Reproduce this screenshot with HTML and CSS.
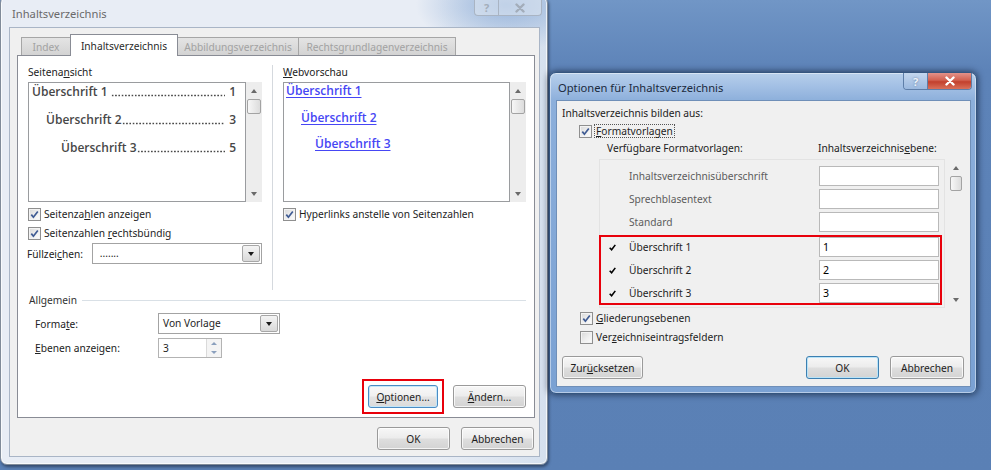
FILE: index.html
```html
<!DOCTYPE html>
<html lang="de">
<head>
<meta charset="utf-8">
<title>Inhaltsverzeichnis</title>
<link rel="stylesheet" href="styles.css">
</head>
<body>
<main class="desktop">

  <section class="win win-main">
    <header class="titlebar">
      <span class="title">Inhaltsverzeichnis</span>
      <div class="capbtns">
        <span class="capbtn cap-help">?</span>
        <span class="capbtn cap-close"><svg class="xicon" viewBox="0 0 12 10"><path d="M2.5 1.5 L9.5 8.5 M9.5 1.5 L2.5 8.5"/></svg></span>
      </div>
    </header>
    <div class="client main-client">
      <div class="tabs">
        <span class="tab tab-index">Index</span>
        <span class="tab tab-active">Inhaltsverzeichnis</span>
        <span class="tab tab-abb">Abbildungsverzeichnis</span>
        <span class="tab tab-rg">Rechtsgrundlagenverzeichnis</span>
      </div>
      <div class="panel">
        <div class="upper">
          <div class="col">
            <div class="cap-label">Seitena<u>n</u>sicht</div>
            <div class="listwrap">
              <div class="listbox preview">
                <div class="toc lvl1"><span>Überschrift 1&nbsp;</span><span class="dots"></span><span class="pg">1</span></div>
                <div class="toc lvl2"><span>Überschrift 2</span><span class="dots"></span><span class="pg">3</span></div>
                <div class="toc lvl3"><span>Überschrift 3</span><span class="dots"></span><span class="pg">5</span></div>
              </div>
              <div class="vscroll">
                <span class="sarrow up"></span>
                <span class="thumb"></span>
                <span class="strack"></span>
                <span class="sarrow down"></span>
              </div>
            </div>
            <div class="check first"><span class="cb"><svg viewBox="0 0 11 11"><path d="M2.3 5.6 L4.4 8.2 L8.8 2.4"/></svg></span><span>Seitenza<u>h</u>len anzeigen</span></div>
            <div class="check"><span class="cb"><svg viewBox="0 0 11 11"><path d="M2.3 5.6 L4.4 8.2 L8.8 2.4"/></svg></span><span>Seitenzahlen <u>r</u>echtsbündig</span></div>
            <div class="field">
              <span class="flabel">Füllzei<u>c</u>hen:</span>
              <div class="combo combo-fz"><span class="ctext">.......</span><span class="cdrop"></span></div>
            </div>
          </div>
          <div class="vsep"></div>
          <div class="col">
            <div class="cap-label"><u>W</u>ebvorschau</div>
            <div class="listwrap">
              <div class="listbox web">
                <div class="wlink lvl1">Überschrift 1</div>
                <div class="wlink lvl2">Überschrift 2</div>
                <div class="wlink lvl3">Überschrift 3</div>
              </div>
              <div class="vscroll">
                <span class="sarrow up"></span>
                <span class="thumb"></span>
                <span class="strack"></span>
                <span class="sarrow down"></span>
              </div>
            </div>
            <div class="check first"><span class="cb"><svg viewBox="0 0 11 11"><path d="M2.3 5.6 L4.4 8.2 L8.8 2.4"/></svg></span><span>Hyperlinks anstelle von Seitenzahlen</span></div>
          </div>
        </div>
        <div class="group"><span>Allgemein</span><span class="gline"></span></div>
        <div class="form">
          <span class="flabel">Forma<u>t</u>e:</span>
          <div class="combo combo-fmt"><span class="ctext">Von Vorlage</span><span class="cdrop"></span></div>
          <span class="flabel"><u>E</u>benen anzeigen:</span>
          <div class="spin"><span class="stext">3</span><span class="sbtns"><span class="sup"></span><span class="sdown"></span></span></div>
        </div>
        <div class="panel-buttons">
          <div class="redframe"><span class="btn btn-focus"><span><u>O</u>ptionen...</span></span></div>
          <span class="btn"><span><u>Ä</u>ndern...</span></span>
        </div>
      </div>
      <div class="dlg-buttons">
        <span class="btn">OK</span>
        <span class="btn">Abbrechen</span>
      </div>
    </div>
  </section>

  <section class="win win-opts">
    <header class="titlebar">
      <span class="title">Optionen für Inhaltsverzeichnis</span>
      <div class="capbtns">
        <span class="capbtn cap-help">?</span>
        <span class="capbtn cap-close"><svg class="xicon" viewBox="0 0 12 10"><path d="M2.5 1.5 L9.5 8.5 M9.5 1.5 L2.5 8.5"/></svg></span>
      </div>
    </header>
    <div class="client opts-client">
      <div class="opts-intro">Inhaltsverzeichnis bilden aus:</div>
      <div class="check opts-fv"><span class="cb"><svg viewBox="0 0 11 11"><path d="M2.3 5.6 L4.4 8.2 L8.8 2.4"/></svg></span><span class="focusrect"><u>F</u>ormatvorlagen</span></div>
      <div class="opts-head"><span>Verfügbare Formatvorlagen:</span><span>Inhaltsverzeichnis<u>e</u>bene:</span></div>
      <div class="optlist">
        <div class="rows">
          <div class="srow muted"><span class="mark"></span><span class="sname">Inhaltsverzeichnisüberschrift</span><span class="lvl"></span></div>
          <div class="srow muted"><span class="mark"></span><span class="sname">Sprechblasentext</span><span class="lvl"></span></div>
          <div class="srow muted"><span class="mark"></span><span class="sname">Standard</span><span class="lvl"></span></div>
          <div class="redbox">
            <div class="srow"><span class="mark"><svg viewBox="0 0 8 8"><path d="M0.8 4.2 L3 6.6 L7.2 1"/></svg></span><span class="sname">Überschrift 1</span><span class="lvl">1</span></div>
            <div class="srow"><span class="mark"><svg viewBox="0 0 8 8"><path d="M0.8 4.2 L3 6.6 L7.2 1"/></svg></span><span class="sname">Überschrift 2</span><span class="lvl">2</span></div>
            <div class="srow"><span class="mark"><svg viewBox="0 0 8 8"><path d="M0.8 4.2 L3 6.6 L7.2 1"/></svg></span><span class="sname">Überschrift 3</span><span class="lvl">3</span></div>
          </div>
        </div>
        <div class="vscroll opts-scroll">
          <span class="sarrow up"></span>
          <span class="thumb"></span>
          <span class="strack"></span>
          <span class="sarrow down"></span>
        </div>
      </div>
      <div class="check opts-gl"><span class="cb"><svg viewBox="0 0 11 11"><path d="M2.3 5.6 L4.4 8.2 L8.8 2.4"/></svg></span><span><u>G</u>liederungsebenen</span></div>
      <div class="check opts-vz"><span class="cb"></span><span>Ver<u>z</u>eichniseintragsfeldern</span></div>
      <div class="opts-buttons">
        <span class="btn btn-reset">Zur<u>ü</u>cksetzen</span>
        <span class="spacer"></span>
        <span class="btn btn-default">OK</span>
        <span class="btn btn-cancel">Abbrechen</span>
      </div>
    </div>
  </section>

</main>
</body>
</html>
```

FILE: styles.css
```css
* { box-sizing: border-box; }
html, body { margin: 0; padding: 0; }
body {
  width: 991px;
  height: 470px;
  overflow: hidden;
  background: #5a80b5;
  font-family: "Noto Sans", "Open Sans", sans-serif;
  font-size: 10.2px;
  color: #1e1e1e;
}
u { text-decoration: underline; text-underline-offset: 1px; }

.desktop {
  position: relative;
  width: 991px;
  height: 470px;
  background: linear-gradient(180deg, #7196c6 0, #5d83b8 70px, #5a80b5 100%);
}

/* ---------- windows ---------- */
.win {
  position: absolute;
  display: flex;
  flex-direction: column;
}
.titlebar {
  display: flex;
  justify-content: space-between;
  align-items: flex-start;
  flex: none;
}
.title { font-size: 11.2px; line-height: 14px; white-space: nowrap; }
.capbtns { display: flex; }
.capbtn {
  display: flex;
  align-items: center;
  justify-content: center;
  font-weight: 700;
  font-size: 11px;
}
.xicon { width: 12px; height: 10px; }
.xicon path { fill: none; stroke-width: 2.4; stroke-linecap: round; }

.client {
  flex: 1;
  display: flex;
  flex-direction: column;
  background: #f0f0f0;
}

/* main (inactive) window */
.win-main {
  left: 0;
  top: -4px;
  width: 548px;
  height: 469px;
  border: 1px solid #808b99;
  border-radius: 7px;
  background:
    radial-gradient(ellipse 90px 46px at 505px 8px, rgba(140, 172, 215, 0.85), rgba(140, 172, 215, 0) 100%),
    linear-gradient(90deg, #e8edf5 0%, #e8edf5 80%, #d5e0ee 100%);
  box-shadow: 1px 2px 3px rgba(20, 30, 50, 0.55), inset 0 0 0 1px rgba(255, 255, 255, 0.7);
}
.win-main .titlebar { height: 30px; padding: 0 5px 0 11px; }
.win-main .title { padding-top: 10px; color: #6a6a6a; }
.win-main .capbtns {
  margin-top: 3px;
  height: 16px;
  border: 1px solid #a9b4c3;
  border-top: none;
  border-radius: 0 0 4px 4px;
  background: rgba(225, 233, 243, 0.55);
}
.win-main .capbtn { color: #a3adba; }
.win-main .cap-help { width: 24px; border-right: 1px solid #a9b4c3; }
.win-main .cap-close { width: 42px; }
.win-main .xicon path { stroke: #a3adba; }
.main-client {
  margin: 0 7px 7px 8px;
  border: 1px solid #a9b5c6;
  padding: 6px 4px 6px 7px;
}

/* tabs */
.tabs {
  height: 21px;
  display: flex;
  align-items: flex-end;
  padding-left: 4px;
  flex: none;
}
.tab {
  height: 18px;
  display: flex;
  align-items: center;
  justify-content: center;
  border: 1px solid #a6a6a6;
  border-bottom: none;
  background: linear-gradient(#e4e4e4, #d3d3d3);
  color: #a2a2a2;
  margin-left: -1px;
  white-space: nowrap;
}
.tab-index { width: 50px; margin-left: 0; }
.tab-active {
  width: 108px;
  height: 22px;
  background: #fff;
  border-color: #898c95;
  color: #2a2a2a;
  margin-bottom: -1px;
  position: relative;
  z-index: 1;
}
.tab-abb { width: 122px; }
.tab-rg { width: 158px; }

.panel {
  flex: 1;
  display: flex;
  flex-direction: column;
  background: #fff;
  border: 1px solid #898c95;
  padding: 9px 8px 0 10px;
}
.upper {
  display: grid;
  grid-template-columns: 234px 21px 243px;
  height: 225px;
}
.col { display: flex; flex-direction: column; }
.vsep { width: 1px; justify-self: center; background: #d5d9de; }
.cap-label { line-height: 14px; margin-bottom: 3px; color: #222; }

.listwrap { display: flex; height: 120px; }
.listbox {
  flex: 1;
  border: 1px solid #9a9c9f;
  background: #fff;
  overflow: hidden;
}
.preview {
  padding: 0 9px 0 3px;
  font-family: "Open Sans", "Noto Sans", sans-serif;
  font-weight: 600;
  font-size: 12px;
  color: #474747;
}
.toc { display: flex; line-height: 18px; margin-bottom: 10px; white-space: nowrap; }
.toc .dots {
  flex: 1;
  height: 18px;
  background-image: radial-gradient(circle, #4a4a4a 0.85px, rgba(74, 74, 74, 0) 1.15px);
  background-size: 3.3px 3px;
  background-repeat: repeat-x;
  background-position: left 0 bottom 4px;
}
.toc .pg { padding-left: 4px; }
.preview .lvl2 { padding-left: 14px; }
.preview .lvl3 { padding-left: 29px; }

.web {
  padding-left: 2px;
  font-family: "Open Sans", "Noto Sans", sans-serif;
  font-weight: 600;
  font-size: 12px;
}
.wlink {
  line-height: 16px;
  margin-bottom: 10.5px;
  color: #4646f4;
  text-decoration: underline;
  text-underline-offset: 2px;
}
.web .lvl2 { padding-left: 15px; }
.web .lvl3 { padding-left: 29px; }

.vscroll {
  width: 16px;
  display: flex;
  flex-direction: column;
  background: #ededed;
}
.sarrow { height: 17px; display: flex; align-items: center; justify-content: center; flex: none; }
.sarrow::before {
  content: "";
  border-left: 3.5px solid transparent;
  border-right: 3.5px solid transparent;
}
.sarrow.up::before { border-bottom: 4px solid #6a6a6a; }
.sarrow.down::before { border-top: 4px solid #6a6a6a; }
.thumb {
  height: 15px;
  margin: 0 1px;
  border: 1px solid #a3a3a3;
  border-radius: 2px;
  background: linear-gradient(90deg, #f7f7f7, #dcdcdc);
  flex: none;
}
.strack { flex: 1; }

.check { display: flex; align-items: center; height: 18px; gap: 3px; white-space: nowrap; }
.check.first { margin-top: 3px; }
.check + .check { margin-top: 1px; }
.cb {
  width: 13px;
  height: 13px;
  flex: none;
  border: 1px solid #8f8f8f;
  background: linear-gradient(135deg, #d8d8d8 0%, #efefef 55%, #fdfdfd 100%);
  box-shadow: inset 0 0 0 1px #f3f3f3;
  display: flex;
  align-items: center;
  justify-content: center;
}
.cb svg { width: 11px; height: 11px; }
.cb path { fill: none; stroke: #3f5b93; stroke-width: 1.7; }

.field { display: flex; align-items: center; margin-top: 1px; margin-left: -1px; }
.flabel { white-space: nowrap; color: #222; }
.field .flabel { width: 65px; }
.combo {
  height: 21px;
  display: flex;
  border: 1px solid #a3a3a3;
  background: #fff;
}
.combo-fz { width: 171px; }
.combo-fmt { width: 122px; }
.ctext { flex: 1; padding-left: 7px; line-height: 19px; white-space: nowrap; }
.combo-fmt .ctext { padding-left: 4px; }
.cdrop {
  width: 18px;
  margin: 1px;
  border: 1px solid #a7a7a7;
  border-radius: 2px;
  background: linear-gradient(#f4f4f4, #d9d9d9);
  display: flex;
  align-items: center;
  justify-content: center;
}
.cdrop::before {
  content: "";
  border-left: 3.5px solid transparent;
  border-right: 3.5px solid transparent;
  border-top: 4px solid #1a1a1a;
}

.group { display: flex; align-items: center; height: 14px; margin-top: 3px; padding-left: 1px; color: #333; }
.gline { flex: 1; height: 1px; margin-left: 5px; background: #d9e0e6; }

.form {
  display: grid;
  grid-template-columns: 123px auto;
  align-items: center;
  row-gap: 4px;
  margin-top: 6px;
  padding-left: 7px;
}
.form .combo, .form .spin { justify-self: start; }
.spin {
  width: 64px;
  height: 20px;
  display: flex;
  border: 1px solid #b3b3b3;
  background: #fff;
}
.stext { flex: 1; padding-left: 4px; line-height: 18px; }
.sbtns { width: 15px; display: flex; flex-direction: column; border-left: 1px solid #dadada; background: #f4f4f4; }
.sbtns span { flex: 1; display: flex; align-items: center; justify-content: center; }
.sbtns span::before {
  content: "";
  border-left: 3px solid transparent;
  border-right: 3px solid transparent;
}
.sup::before { border-bottom: 3px solid #8ba0bd; }
.sdown::before { border-top: 3px solid #8ba0bd; }

.panel-buttons {
  display: flex;
  justify-content: flex-end;
  align-items: center;
  gap: 9px;
  margin-top: 21px;
}
.redframe { border: 2px solid #e8000b; padding: 4px; display: flex; }

.btn {
  width: 73px;
  height: 23px;
  display: flex;
  align-items: center;
  justify-content: center;
  border: 1px solid #9a9a9a;
  border-radius: 3px;
  background: linear-gradient(#f7f7f7 0%, #ececec 48%, #dedede 52%, #d3d3d3 100%);
  box-shadow: inset 0 0 0 1px rgba(255, 255, 255, 0.75);
  color: #1e1e1e;
  white-space: nowrap;
}
.btn-focus { width: 70px; border-color: #4a8cc4; box-shadow: inset 0 0 0 1px #c4e6f8; background: linear-gradient(#f9f9f9 0%, #f0f0f0 48%, #e4e4e4 52%, #dadada 100%); }
.dlg-buttons { display: flex; justify-content: flex-end; gap: 11px; margin-top: 9px; padding-right: 1px; flex: none; }

/* options (active) window */
.win-opts {
  left: 549px;
  top: 72px;
  width: 428px;
  height: 322px;
  border: 1px solid #34557f;
  border-radius: 7px;
  background: linear-gradient(180deg, #b7cfeb 0, #a2bfe4 14px, #8cafdb 28px, #7aa1d3 100%);
  box-shadow: 0 0 6px 1px rgba(10, 20, 40, 0.6), inset 0 0 0 1px rgba(255, 255, 255, 0.45);
}
.win-opts .titlebar { height: 27px; padding: 0 4px 0 8px; }
.win-opts .title { padding-top: 8px; color: #1b2a3c; }
.win-opts .capbtns {
  height: 17px;
  border: 1px solid #5e7ea8;
  border-top: none;
  border-radius: 0 0 4px 4px;
  overflow: hidden;
}
.win-opts .cap-help {
  width: 24px;
  color: #eef4fb;
  background: linear-gradient(#c3d6ee, #9bb9df);
  border-right: 1px solid #5e7ea8;
  text-shadow: 0 0 2px #5a7196;
}
.win-opts .cap-close {
  width: 43px;
  background: linear-gradient(#e3928a 0%, #d2604f 45%, #c2402d 55%, #d9705a 100%);
}
.win-opts .xicon path { stroke: #fff; }
.opts-client {
  margin: 0 5px 6px 6px;
  border: 1px solid #6f8fb8;
  padding: 5px 6px 7px 5px;
}
.opts-intro { line-height: 14px; color: #222; }
.opts-fv { height: 16px; margin-top: 3px; margin-left: 17px; gap: 2px; }
.focusrect { border: 1px dotted #555; padding: 0 1px; line-height: 12px; }
.opts-head {
  display: grid;
  grid-template-columns: 211px auto;
  line-height: 14px;
  margin-top: 2px;
  padding-left: 45px;
  color: #222;
}
.optlist { display: flex; gap: 3px; margin-top: 4px; margin-left: 37px; }
.rows {
  width: 346px;
  border: 1px solid #e3e3e3;
  padding: 6px 0 2px 0;
  display: flex;
  flex-direction: column;
  gap: 3px;
}
.srow {
  display: grid;
  grid-template-columns: 29px 190px 120px;
  height: 20px;
  align-items: center;
}
.srow.muted .sname { color: #5c5c5c; }
.mark { display: flex; padding-left: 8px; }
.mark svg { width: 7px; height: 7px; }
.mark path { fill: none; stroke: #000; stroke-width: 1.8; }
.lvl {
  height: 20px;
  border: 1px solid #b9b9b9;
  background: #fff;
  padding-left: 3px;
  line-height: 18px;
  color: #000;
  font-size: 10.6px;
}
.sname { white-space: nowrap; }
.redbox {
  border: 2px solid #e8000b;
  margin-left: -1px;
  width: 343px;
  display: flex;
  flex-direction: column;
  gap: 3px;
}
.redbox .srow { grid-template-columns: 28px 190px 120px; }
.opts-scroll { background: #f0f0f0; }
.opts-scroll .thumb { margin: 0 2px; }
.opts-gl { margin-top: 1px; margin-left: 18px; }
.opts-vz { margin-left: 18px; }
.opts-buttons { display: flex; align-items: center; margin-top: 10px; gap: 11px; }
.opts-buttons .spacer { flex: 1; }
.btn-reset { width: 81px; }
.btn-cancel { width: 74px; }
.btn-default { border-color: #3c7fb1; box-shadow: inset 0 0 0 1px #b8e3f8; }
```
